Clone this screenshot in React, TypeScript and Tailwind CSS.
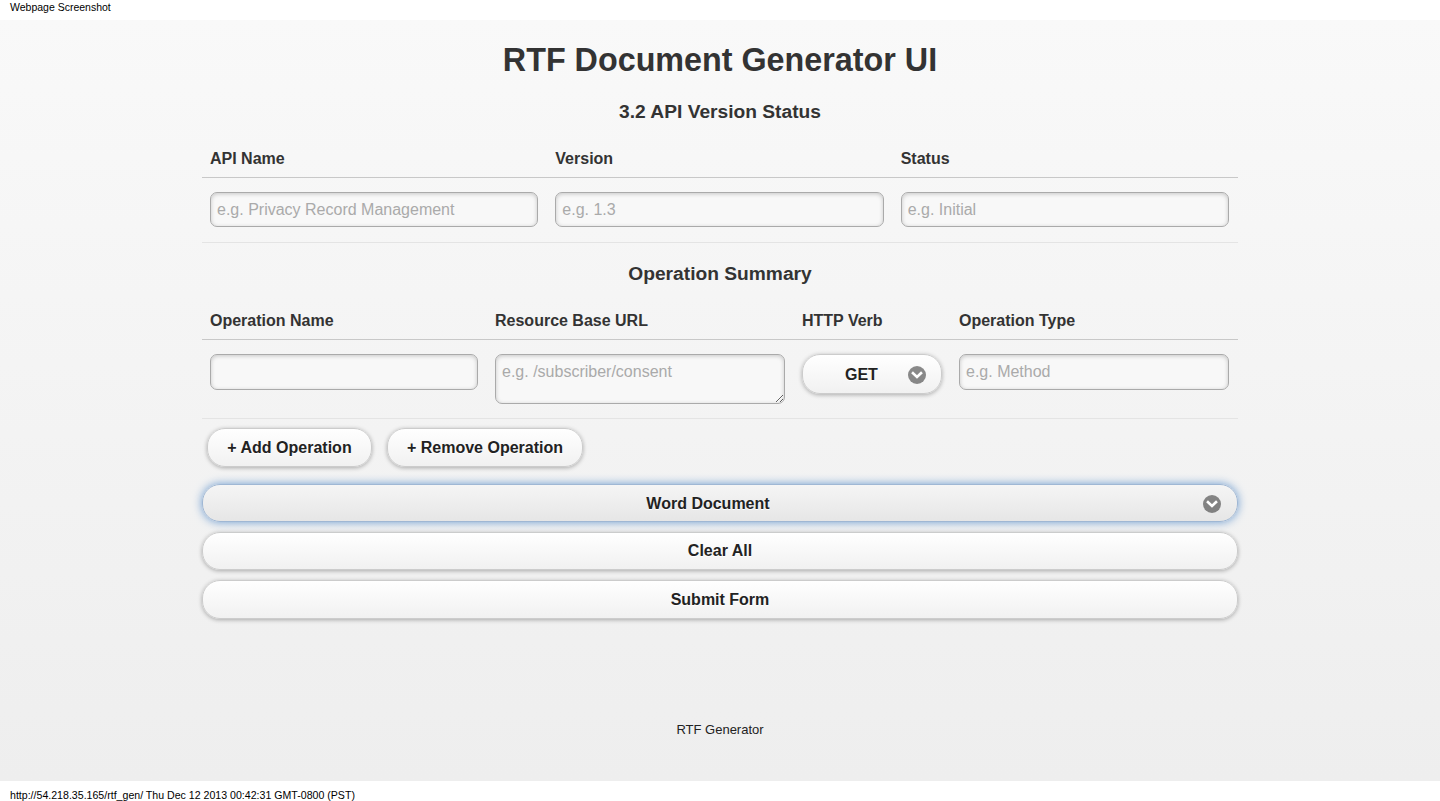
import { useState } from 'react'

const font = { fontFamily: '"Liberation Sans", Arial, Helvetica, sans-serif' }

const inputCls =
  'h-[35px] w-full rounded-[7px] border border-[#aaa] bg-[#f8f8f8] px-[6px] text-[16px] text-[#333] placeholder:text-[#aaa] shadow-[inset_0_1px_4px_rgba(0,0,0,0.2)] outline-none'

const btnCls =
  'rounded-[18px] border border-[#ccc] bg-gradient-to-b from-white to-[#f1f1f1] text-[16px] font-bold text-[#222] [text-shadow:0_1px_0_#fff] shadow-[0_1px_4px_rgba(0,0,0,0.3)]'

function Chevron() {
  return (
    <svg width="18" height="18" viewBox="0 0 18 18" className="shrink-0">
      <circle cx="9" cy="9" r="9" fill="rgba(0,0,0,0.45)" />
      <path d="M5 7.2 L9 11 L13 7.2" fill="none" stroke="#fff" strokeWidth="2.6" strokeLinecap="square" />
    </svg>
  )
}

export default function App() {
  const [ops, setOps] = useState(1)

  return (
    <div style={font} className="flex min-h-[801px] flex-col text-[#333]">
      {/* barra de cima */}
      <div className="h-[20px] bg-white pl-[10px] text-[10.5px] leading-[14px] text-black">Webpage Screenshot</div>

      {/* página */}
      <div className="flex h-[761px] flex-col bg-gradient-to-b from-[#f9f9f9] to-[#eee]">
        <div className="mx-auto w-[1036px]">
          <h1 className="pt-[21px] text-center text-[32.3px] font-bold leading-[38px] text-[#333]">RTF Document Generator UI</h1>
          <h3 className="mt-[21px] pt-[1px] text-center text-[19.2px] font-bold leading-[22px]">3.2 API Version Status</h3>

          {/* tabela 1 */}
          <div className="mt-[19px]">
            <div className="grid grid-cols-3 border-b border-[#c8c8c8] pt-[7px] pb-[8px] text-[16px] font-bold leading-[20px]">
              <div className="px-[8px]">API Name</div>
              <div className="px-[8px]">Version</div>
              <div className="px-[8px]">Status</div>
            </div>
            <div className="grid grid-cols-3 gap-[17px] border-b border-[#e4e4e4] pt-[14px] pb-[15px] pl-[8px] pr-[9px]">
              <input className={inputCls} placeholder="e.g. Privacy Record Management" />
              <input className={inputCls} placeholder="e.g. 1.3" />
              <input className={inputCls} placeholder="e.g. Initial" />
            </div>
          </div>

          <h3 className="mt-[19px] pt-[1px] text-center text-[19.2px] font-bold leading-[22px]">Operation Summary</h3>

          {/* tabela 2 */}
          <div className="mt-[19px]">
            <div className="grid grid-cols-[285px_307px_157px_287px] border-b border-[#c8c8c8] pt-[7px] pb-[8px] text-[16px] font-bold leading-[20px]">
              <div className="px-[8px]">Operation Name</div>
              <div className="px-[8px]">Resource Base URL</div>
              <div className="px-[8px]">HTTP Verb</div>
              <div className="px-[8px]">Operation Type</div>
            </div>
            {Array.from({ length: ops }).map((_, i) => (
              <div key={i} className="grid grid-cols-[285px_307px_157px_287px] items-start border-b border-[#e4e4e4] pt-[14px] pb-[14px]">
                <div className="pl-[8px] pr-[9px]">
                  <input className={inputCls + ' h-[36px]'} />
                </div>
                <div className="pl-[8px] pr-[9px]">
                  <textarea
                    className={inputCls + ' block h-[50px] resize pt-[7px] leading-[20px]'}
                    placeholder="e.g. /subscriber/consent"
                  />
                </div>
                <div className="pl-[8px] pr-[9px]">
                  <button className={btnCls + ' flex h-[40px] w-[140px] items-center justify-between pt-[1px] pl-[42px] pr-[15px]'}>
                    <span>GET</span>
                    <Chevron />
                  </button>
                </div>
                <div className="pl-[8px] pr-[9px]">
                  <input className={inputCls + ' h-[36px]'} placeholder="e.g. Method" />
                </div>
              </div>
            ))}
          </div>

          {/* botões */}
          <div className="mt-[9px] flex gap-[15px] pl-[5px]">
            <button onClick={() => setOps(o => o + 1)} className={btnCls + ' h-[39px] w-[165px] pt-[1px]'}>+ Add Operation</button>
            <button onClick={() => setOps(o => Math.max(1, o - 1))} className={btnCls + ' h-[39px] w-[196px] pt-[1px]'}>+ Remove Operation</button>
          </div>

          <div className="mt-[17px] flex flex-col gap-[10px]">
            <button className="relative flex h-[38px] w-full items-center justify-center rounded-[18px] border border-[#9fb7d4] bg-gradient-to-b from-[#f5f5f5] to-[#e6e6e6] pt-[1px] text-[16px] font-bold text-[#222] [text-shadow:0_1px_0_#fff] shadow-[0_0_10px_#6c9bd0]">
              <span className="pr-[24px]">Word Document</span>
              <span className="absolute right-[16px] top-[10px]"><Chevron /></span>
            </button>
            <button className={btnCls + ' h-[38px] w-full'}>Clear All</button>
            <button className={btnCls + ' h-[39px] w-full'}>Submit Form</button>
          </div>
        </div>

        <div className="mt-auto pb-[43px] text-center text-[13px] leading-[16px] text-[#222]">RTF Generator</div>
      </div>

      {/* rodapé */}
      <div className="h-[20px] bg-white pl-[10px] pt-[8px] text-[10.6px] leading-[12px] text-black">
        http://54.218.35.165/rtf_gen/ Thu Dec 12 2013 00:42:31 GMT-0800 (PST)
      </div>
    </div>
  )
}
